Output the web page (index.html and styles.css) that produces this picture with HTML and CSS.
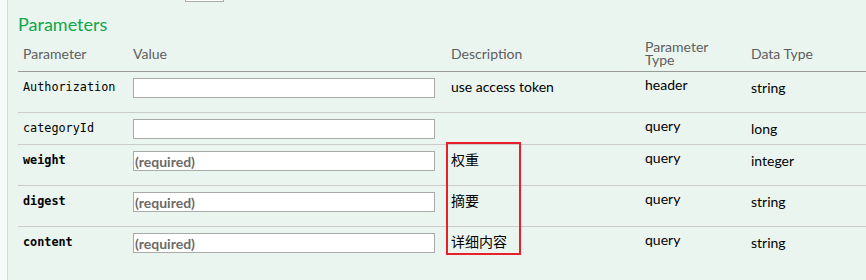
FILE: index.html
```html
<!DOCTYPE html>
<html lang="zh">
<head>
  <meta charset="UTF-8">
  <title>Parameters</title>
  <link rel="stylesheet" href="styles.css">
</head>
<body>
  <div class="content">
    <div class="prev-box"></div>
    <h4>Parameters</h4>
    <table class="params">
      <thead>
        <tr>
          <th class="col-name">Parameter</th>
          <th class="col-value">Value</th>
          <th class="col-desc">Description</th>
          <th class="col-type">Parameter<br>Type</th>
          <th class="col-data">Data Type</th>
        </tr>
      </thead>
      <tbody>
        <tr>
          <td class="code">Authorization</td>
          <td><input type="text" class="field"></td>
          <td><p class="desc">use access token</p></td>
          <td class="ptype">header</td>
          <td class="dtype">string</td>
        </tr>
        <tr>
          <td class="code">categoryId</td>
          <td><input type="text" class="field"></td>
          <td></td>
          <td class="ptype">query</td>
          <td class="dtype">long</td>
        </tr>
        <tr>
          <td class="code required">weight</td>
          <td><input type="text" class="field required" placeholder="(required)"></td>
          <td class="desc-cell"><span class="highlight"></span><p class="desc">权重</p></td>
          <td class="ptype">query</td>
          <td class="dtype">integer</td>
        </tr>
        <tr>
          <td class="code required">digest</td>
          <td><input type="text" class="field required" placeholder="(required)"></td>
          <td><p class="desc">摘要</p></td>
          <td class="ptype">query</td>
          <td class="dtype">string</td>
        </tr>
        <tr>
          <td class="code required">content</td>
          <td><input type="text" class="field required" placeholder="(required)"></td>
          <td><p class="desc">详细内容</p></td>
          <td class="ptype">query</td>
          <td class="dtype">string</td>
        </tr>
      </tbody>
    </table>
  </div>
</body>
</html>
```

FILE: styles.css
```css
body {
  margin: 0;
  background: #f5fbf8;
  font-family: 'Lato', 'Noto Sans CJK SC', sans-serif;
  overflow: hidden;
}
.content {
  margin-left: 7px;
  border-left: 1px solid #c3e8d1;
  background: #ebf5f0;
  padding: 0 0 20px 10px;
  min-height: 280px;
  box-sizing: border-box;
}
.prev-box {
  margin-left: 167px;
  width: 37px;
  height: 1px;
  background: #fff;
  border: 1px solid #aaa;
  border-top: none;
}
h4 {
  margin: 11px 0 4px;
  color: #10a54a;
  font-size: 18px;
  font-weight: normal;
  line-height: 22px;
}
.params {
  width: 100%;
  border-collapse: collapse;
  table-layout: fixed;
}
.params th {
  text-align: left;
  font-weight: normal;
  color: #5e5e5e;
  font-size: 14px;
  line-height: 13px;
  padding: 1px 5px 5px;
  height: 26px;
  vertical-align: middle;
  border-bottom: 1px solid #999;
}
.col-name { width: 100px; }
.col-value { width: 308px; }
.col-desc { width: 184px; }
.col-type { width: 96px; }
.params td {
  padding: 6px 5px 5px;
  vertical-align: top;
  font-size: 14px;
  color: #000;
  border-bottom: 1px solid #ccc;
}
.params tbody tr:last-child td {
  border-bottom: none;
}
.code {
  font-family: 'DejaVu Sans Mono', monospace;
  font-size: 11.8px !important;
  line-height: 16px;
  padding-top: 7px !important;
}
.code.required {
  font-weight: bold;
}
.field {
  display: block;
  width: 302px;
  height: 20px;
  box-sizing: border-box;
  margin: 0;
  padding: 0 1px;
  border: 1px solid #aaa;
  background: #fff;
  font-family: 'Lato', sans-serif;
  font-size: 14px;
}
.field.required::placeholder {
  color: #6f6a66;
  font-weight: bold;
}
.desc {
  margin: 0 0 11px;
  line-height: 18px;
  font-family: 'Lato', 'Noto Sans CJK SC', sans-serif;
}
.ptype {
  line-height: 16px;
  padding-top: 5px !important;
}
.dtype {
  line-height: 16px;
  padding-top: 8px !important;
}
.desc-cell {
  position: relative;
}
/* annotation box drawn over the description column */
.highlight {
  position: absolute;
  left: 0;
  top: -3px;
  width: 75px;
  height: 113px;
  box-sizing: border-box;
  border: 2px solid #e8202a;
}
```
